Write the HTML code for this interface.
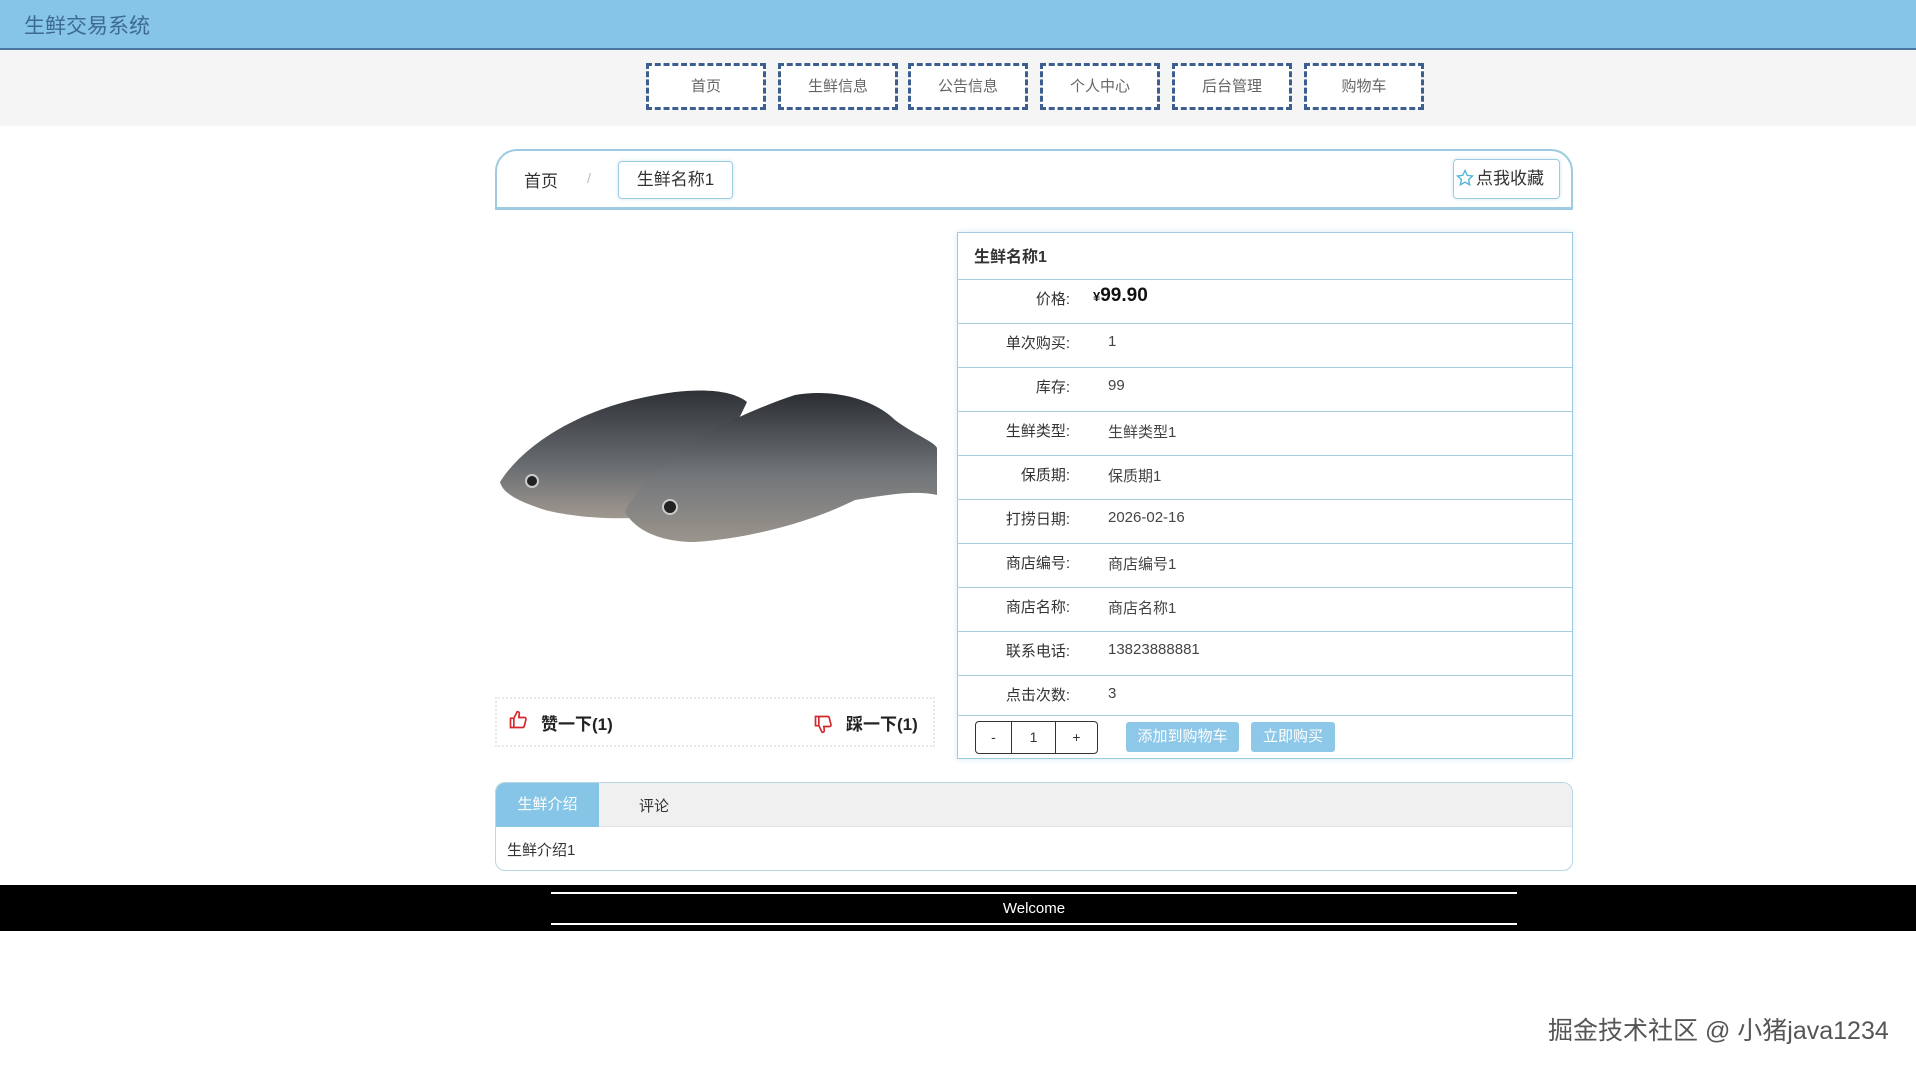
<!DOCTYPE html>
<html><head><meta charset="utf-8"><style>
*{box-sizing:border-box;margin:0;padding:0}
body{width:1916px;height:1070px;background:#fff;font-family:"Liberation Sans","Noto Sans CJK SC",sans-serif;position:relative;overflow:hidden;color:#333}
.abs{position:absolute}
.hdr{left:0;top:0;width:1916px;height:50px;background:#87c5e6;border-bottom:2px solid #4a77a0}
.hdr span{position:absolute;left:24px;top:10px;font-size:21px;color:#3d6a94}
.nav{left:0;top:50px;width:1916px;height:76px;background:#f5f5f5}
.nb{position:absolute;top:13px;width:120px;height:47px;border:3px dashed #3d5f8f;background:#fff;font-size:15px;color:#666;text-align:center;line-height:41px}
.bc{left:495px;top:149px;width:1078px;height:61px;border:2px solid #9ecbe0;border-bottom-width:3px;border-radius:22px 22px 0 0}
.chip{border:1px solid #9ecbe0;border-radius:4px;box-shadow:0 0 4px #cfe6f2}
.tbl{left:957px;top:232px;width:616px;height:527px;border:1px solid #9ecbe0;box-shadow:0 0 6px #d4eaf5}
.row{position:absolute;left:0;width:614px;height:44px;border-top:1px solid #a9cde0;font-size:15px}
.row .l{position:absolute;right:502px;top:8px;color:#333}
.row .v{position:absolute;left:150px;top:9px;color:#444}
.btn{position:absolute;top:6px;height:30px;background:#8ec8e8;color:#fff;font-size:15px;line-height:30px;text-align:center;border-radius:3px}
</style></head><body>
<div class="abs hdr"><span>生鲜交易系统</span></div>
<div class="abs nav">
<div class="nb" style="left:646px">首页</div>
<div class="nb" style="left:778px">生鲜信息</div>
<div class="nb" style="left:908px">公告信息</div>
<div class="nb" style="left:1040px">个人中心</div>
<div class="nb" style="left:1172px">后台管理</div>
<div class="nb" style="left:1304px">购物车</div>
</div>
<div class="abs bc"></div>
<div class="abs" style="left:524px;top:167px;font-size:17px;color:#333">首页</div>
<div class="abs" style="left:587px;top:170px;font-size:14px;color:#bbb">/</div>
<div class="abs chip" style="left:618px;top:161px;width:115px;height:38px;font-size:17px;line-height:36px;text-align:center">生鲜名称1</div>
<div class="abs chip" style="left:1453px;top:159px;width:107px;height:40px;font-size:17px;line-height:38px;padding-left:22px">点我收藏</div>
<svg class="abs" style="left:1456px;top:169px" width="18" height="18" viewBox="0 0 24 24"><path d="M12 2l3 6.5 7 .8-5.2 4.8 1.4 7L12 17.6 5.8 21.1l1.4-7L2 9.3l7-.8z" fill="none" stroke="#4fb3d9" stroke-width="1.8"/></svg>

<svg class="abs" style="left:495px;top:370px" width="445" height="220" viewBox="0 0 445 220">
<defs><linearGradient id="g1" x1="0" y1="0" x2="0" y2="1"><stop offset="0" stop-color="#2e3236"/><stop offset=".6" stop-color="#6a6e72"/><stop offset="1" stop-color="#a09890"/></linearGradient>
<linearGradient id="g2" x1="0" y1="0" x2="0" y2="1"><stop offset="0" stop-color="#2a2e32"/><stop offset=".55" stop-color="#72767a"/><stop offset="1" stop-color="#9a948c"/></linearGradient></defs>
<path d="M5 112 C25 80 80 35 180 22 C215 18 240 22 252 32 L200 140 C150 152 90 150 50 140 C25 132 8 124 5 112Z" fill="url(#g1)"/>
<path d="M130 142 C150 100 210 55 300 25 C340 18 380 30 400 50 C420 65 440 72 442 78 L442 125 C420 120 390 125 360 130 C320 150 260 168 200 172 C165 172 140 160 130 142Z" fill="url(#g2)"/>
<circle cx="37" cy="111" r="6" fill="#222" stroke="#ccc" stroke-width="2"/>
<circle cx="175" cy="137" r="7" fill="#222" stroke="#ccc" stroke-width="2"/>
</svg>

<div class="abs" style="left:495px;top:697px;width:440px;height:50px;border:2px dotted #e8e8e8"></div>
<svg class="abs" style="left:508px;top:710px" width="20" height="20" viewBox="0 0 24 24"><path d="M3 10h4v11H3zM7 10l4-8c2 0 3 1 2.5 3L13 9h7c1 0 2 1 1.5 2.5l-2 8c-.3 1-1 1.5-2 1.5H7" fill="none" stroke="#d4272b" stroke-width="2"/></svg>
<div class="abs" style="left:541px;top:710px;font-size:17px;font-weight:bold;color:#222">赞一下(1)</div>
<svg class="abs" style="left:813px;top:714px" width="20" height="20" viewBox="0 0 24 24"><path d="M3 3h4v11H3zM7 14l4 8c2 0 3-1 2.5-3L13 15h7c1 0 2-1 1.5-2.5l-2-8C19.2 3.5 18.5 3 17.5 3H7" fill="none" stroke="#d4272b" stroke-width="2"/></svg>
<div class="abs" style="left:846px;top:710px;font-size:17px;font-weight:bold;color:#222">踩一下(1)</div>

<div class="abs tbl">
<div style="position:absolute;left:16px;top:10px;font-size:16px;font-weight:bold;color:#333">生鲜名称1</div>
<div class="row" style="top:46px"><span class="l">价格:</span><span class="v" style="left:135px;top:5px;font-size:19px;font-weight:bold;color:#111"><small style="font-size:13px">¥</small>99.90</span></div>
<div class="row" style="top:90px"><span class="l">单次购买:</span><span class="v">1</span></div>
<div class="row" style="top:134px"><span class="l">库存:</span><span class="v">99</span></div>
<div class="row" style="top:178px"><span class="l">生鲜类型:</span><span class="v">生鲜类型1</span></div>
<div class="row" style="top:222px"><span class="l">保质期:</span><span class="v">保质期1</span></div>
<div class="row" style="top:266px"><span class="l">打捞日期:</span><span class="v">2026-02-16</span></div>
<div class="row" style="top:310px"><span class="l">商店编号:</span><span class="v">商店编号1</span></div>
<div class="row" style="top:354px"><span class="l">商店名称:</span><span class="v">商店名称1</span></div>
<div class="row" style="top:398px"><span class="l">联系电话:</span><span class="v">13823888881</span></div>
<div class="row" style="top:442px"><span class="l">点击次数:</span><span class="v">3</span></div>
<div class="row" style="top:482px;height:44px">
<div style="position:absolute;left:17px;top:5px;width:123px;height:33px;border:1px solid #333;border-radius:4px;font-size:14px;line-height:31px">
<span style="position:absolute;left:0;width:36px;text-align:center;border-right:1px solid #333;height:31px">-</span>
<span style="position:absolute;left:36px;width:44px;text-align:center;border-right:1px solid #333;height:31px">1</span>
<span style="position:absolute;left:80px;width:41px;text-align:center">+</span></div>
<div class="btn" style="left:168px;width:113px">添加到购物车</div>
<div class="btn" style="left:293px;width:84px">立即购买</div>
</div>
</div>

<div class="abs" style="left:495px;top:782px;width:1078px;height:89px;border:1px solid #b8d6e4;border-radius:10px;overflow:hidden">
<div style="height:44px;background:#f0f0f0;border-bottom:1px solid #e4e4e4;position:relative">
<div style="position:absolute;left:0;top:0;width:103px;height:44px;background:#87c5e6;color:#fff;font-size:15px;line-height:44px;text-align:center">生鲜介绍</div>
<div style="position:absolute;left:143px;top:12px;font-size:15px;color:#333">评论</div></div>
<div style="padding:12px 11px;font-size:15px;color:#333">生鲜介绍1</div>
</div>

<div class="abs" style="left:0;top:885px;width:1916px;height:46px;background:#000">
<div style="position:absolute;left:551px;top:7px;width:966px;height:33px;border-top:2px solid #fff;border-bottom:2px solid #fff;color:#fff;font-size:15px;text-align:center;line-height:29px">Welcome</div></div>

<div class="abs" style="left:1548px;top:1011px;font-size:25px;color:#555;text-shadow:0 0 2px #fff">掘金技术社区 @ 小猪java1234</div>
</body></html>
